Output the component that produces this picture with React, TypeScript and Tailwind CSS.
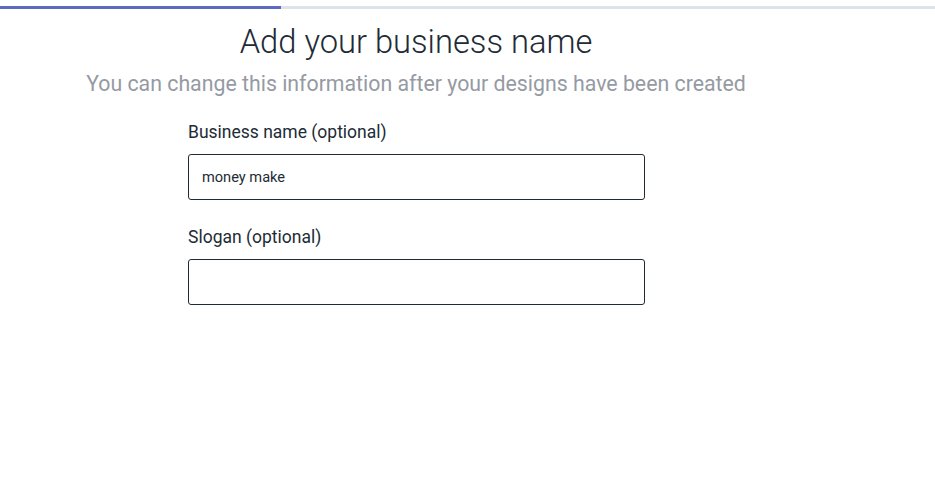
import { useState } from 'react';

function Field({ label, value, onChange }: { label: string; value: string; onChange: (v: string) => void }) {
  return (
    <label className="block">
      <span className="block text-[17.5px] leading-[20px] text-[#212b36]">{label}</span>
      <input
        type="text"
        value={value}
        onChange={(e) => onChange(e.target.value)}
        className="mt-[12px] block h-[46px] w-[457px] rounded-[3px] border border-[#212b36] bg-white px-[13px] text-[14.6px] text-[#212b36] outline-none"
      />
    </label>
  );
}

export default function App() {
  const [name, setName] = useState('money make');
  const [slogan, setSlogan] = useState('');

  return (
    <div className="min-h-[487px] w-[935px] bg-white font-['Roboto',sans-serif]">
      <div className="pt-[6px]">
        <div className="flex h-[3px] w-full bg-[#dfe3e8]">
          <div className="h-full w-[281px] bg-[#5c6ac4]" />
        </div>
      </div>
      <div className="w-[832px] pt-[13px] text-center">
        <h1 className="text-[32.7px] font-light leading-[40px] text-[#212b36]">Add your business name</h1>
        <p className="mt-[10px] text-[21.3px] leading-[24px] text-[#959aa3]">
          You can change this information after your designs have been created
        </p>
      </div>
      <div className="ml-[188px] mt-[26px] flex flex-col gap-[27px]">
        <Field label="Business name (optional)" value={name} onChange={setName} />
        <Field label="Slogan (optional)" value={slogan} onChange={setSlogan} />
      </div>
    </div>
  );
}
